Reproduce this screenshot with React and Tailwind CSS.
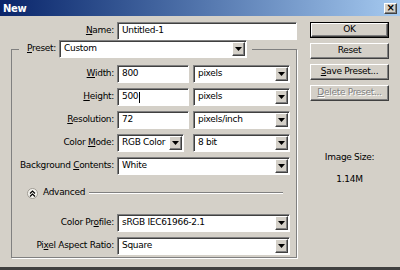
import React from "react";

// Win2000-style "New" document dialog

const sunken =
  "border border-t-[#808080] border-l-[#808080] border-b-white border-r-white shadow-[inset_1px_1px_0_#404040] bg-white";
const raised =
  "bg-[#d4d0c8] border border-t-white border-l-white border-b-[#404040] border-r-[#404040] shadow-[inset_-1px_-1px_0_#808080]";

function Arrow() {
  return (
    <svg width="7" height="4" viewBox="0 0 7 4">
      <polygon points="0,0 7,0 3.5,4" fill="#000" />
    </svg>
  );
}

function Field({ width, children }) {
  return (
    <div
      className={`${sunken} h-[18px] flex items-center pl-[4px] shrink-0`}
      style={{ width }}
    >
      {children}
    </div>
  );
}

function Select({ width, value }) {
  return (
    <div
      className={`${sunken} h-[18px] flex items-center pl-[4px] pr-[1px] shrink-0`}
      style={{ width }}
    >
      <span className="flex-1 truncate">{value}</span>
      <div className={`${raised} w-[13px] h-[14px] flex items-center justify-center`}>
        <Arrow />
      </div>
    </div>
  );
}

function Label({ children, width = "w-[102px]" }) {
  return <span className={`${width} text-right shrink-0 whitespace-nowrap`}>{children}</span>;
}

function Row({ label, children }) {
  return (
    <div className="flex items-center h-[18px]">
      <Label>{label}</Label>
      <div className="flex items-center gap-[4px] ml-[3px]">{children}</div>
    </div>
  );
}

function Button({ children, primary, disabled }) {
  return (
    <div className={`w-[79px] h-[16px] ${primary ? "border border-black" : ""}`}>
      <div
        className={`${raised} w-full h-full flex items-center justify-center ${
          disabled ? "text-[#808080] [text-shadow:1px_1px_0_white]" : ""
        }`}
      >
        {children}
      </div>
    </div>
  );
}

function U({ children }) {
  return <span className="underline underline-offset-[1px]">{children}</span>;
}

export default function App() {
  return (
    <div className="w-[400px] h-[270px] bg-[#d4d0c8] flex flex-col border-b-[3px] border-[#404040] font-['DejaVu_Sans',sans-serif] text-[9px] tracking-[-0.3px] text-black overflow-hidden">
      {/* title bar */}
      <div className="h-[16px] shrink-0 flex items-center justify-between pl-[3px] pr-[3px] bg-gradient-to-r from-[#0a246a] to-[#a6caf0]">
        <span className="text-white font-bold text-[10px]">New</span>
        <div className={`${raised} w-[13px] h-[11px] flex items-center justify-center text-[10px] font-bold leading-none`}>
          ×
        </div>
      </div>

      <div className="flex flex-1">
        {/* left column */}
        <div className="w-[300px] flex flex-col pt-[6px]">
          <div className="flex items-center h-[18px]">
            <Label width="w-[114px]">
              <U>N</U>ame:
            </Label>
            <div className="ml-[3px]">
              <Field width={180}>Untitled-1</Field>
            </div>
          </div>

          <fieldset className="ml-[11px] w-[286px] border border-[#808080] shadow-[1px_1px_0_white] pb-[2px]">
            <legend className="ml-[7px] pl-[1px] pr-[5px] flex items-center">
              <Label width="w-[36px]">
                <U>P</U>reset:
              </Label>
              <div className="ml-[3px]">
                <Select width={188} value="Custom" />
              </div>
            </legend>

            <div className="flex flex-col gap-[5px] pt-[7px]">
              <Row
                label={
                  <>
                    <U>W</U>idth:
                  </>
                }
              >
                <Field width={72}>800</Field>
                <Select width={97} value="pixels" />
              </Row>
              <Row
                label={
                  <>
                    <U>H</U>eight:
                  </>
                }
              >
                <Field width={72}>
                  500<span className="w-px h-[11px] bg-black ml-[1px]" />
                </Field>
                <Select width={97} value="pixels" />
              </Row>
              <Row
                label={
                  <>
                    <U>R</U>esolution:
                  </>
                }
              >
                <Field width={72}>72</Field>
                <Select width={97} value="pixels/inch" />
              </Row>
              <Row
                label={
                  <>
                    Color <U>M</U>ode:
                  </>
                }
              >
                <Select width={67} value="RGB Color" />
                <div className="w-px" />
                <Select width={97} value="8 bit" />
              </Row>
              <Row
                label={
                  <>
                    Background <U>C</U>ontents:
                  </>
                }
              >
                <Select width={173} value="White" />
              </Row>
            </div>

            {/* advanced */}
            <div className="flex items-center h-[12px] mt-[12px]">
              <div className="ml-[15px] w-[11px] h-[11px] rounded-full bg-[#f4f3ee] border border-[#a09c94] flex items-center justify-center">
                <svg width="7" height="7" viewBox="0 0 7 7">
                  <polyline points="1,3.5 3.5,1 6,3.5" fill="none" stroke="#000" strokeWidth="1.2" />
                  <polyline points="1,6.5 3.5,4 6,6.5" fill="none" stroke="#000" strokeWidth="1.2" />
                </svg>
              </div>
              <span className="ml-[5px]">Advanced</span>
              <div className="flex-1 ml-[4px] mr-[13px] h-[2px] border-t border-t-[#808080] border-b border-b-white" />
            </div>

            <div className="flex flex-col gap-[5px] mt-[15px]">
              <Row
                label={
                  <>
                    Color Pr<U>o</U>file:
                  </>
                }
              >
                <Select width={173} value="sRGB IEC61966-2.1" />
              </Row>
              <Row
                label={
                  <>
                    Pi<U>x</U>el Aspect Ratio:
                  </>
                }
              >
                <Select width={173} value="Square" />
              </Row>
            </div>
          </fieldset>
        </div>

        {/* right column */}
        <div className="ml-[10px] pt-[6px] flex flex-col w-[80px]">
          <div className="flex flex-col gap-[5px]">
            <Button primary>OK</Button>
            <Button>Reset</Button>
            <Button>
              <U>S</U>ave Preset...
            </Button>
            <Button disabled>
              <U>D</U>elete Preset...
            </Button>
          </div>
          <div className="mt-[50px] flex flex-col items-center w-[79px]">
            <span>Image Size:</span>
            <span className="mt-[8px]">1.14M</span>
          </div>
        </div>
      </div>
    </div>
  );
}
